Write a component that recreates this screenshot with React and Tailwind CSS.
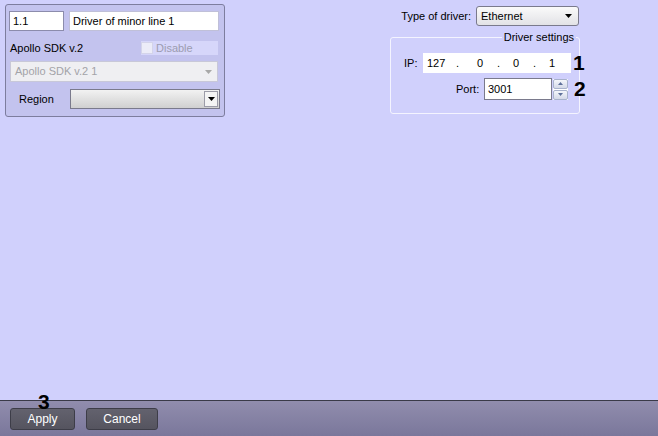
const font = { fontFamily: '"Liberation Sans", Arial, sans-serif' };

function Arrow({ disabled }) {
  return (
    <svg width="7" height="4" viewBox="0 0 7 4" className="block">
      <path d="M0 0 H7 L3.5 4 Z" fill={disabled ? "#a8a8a8" : "#000"} />
    </svg>
  );
}

function Spinner() {
  return (
    <div className="flex h-[21px] w-[15px] flex-col gap-[1px] bg-white">
      <div className="flex flex-1 items-center justify-center rounded-[2px] border border-[#a8b2cc] bg-gradient-to-b from-[#f4f6fb] to-[#d4d9e8]">
        <svg width="5" height="3" viewBox="0 0 5 3"><path d="M0 3 H5 L2.5 0 Z" fill="#5d6f9a" /></svg>
      </div>
      <div className="flex flex-1 items-center justify-center rounded-[2px] border border-[#a8b2cc] bg-gradient-to-b from-[#f4f6fb] to-[#d4d9e8]">
        <svg width="5" height="3" viewBox="0 0 5 3"><path d="M0 0 H5 L2.5 3 Z" fill="#5d6f9a" /></svg>
      </div>
    </div>
  );
}

export default function App() {
  return (
    <div style={font} className="flex h-[436px] w-[658px] flex-col overflow-hidden bg-[#d0d0fc] text-[11px] text-black">
      <div className="relative flex flex-1 items-start">
        {/* Left */}
        <div className="ml-[5px] mt-[4px] flex h-[113px] w-[220px] flex-col rounded-[3px] border border-[#7d7d9e] bg-[#c3c3ee] px-[3px] pt-[6px]">
          <div className="flex gap-[5px]">
            <div className="flex h-[20px] w-[55px] items-center border border-[#8c8cac] bg-white px-[3px]">1.1</div>
            <div className="flex h-[20px] w-[150px] items-center border border-[#c0c0d8] bg-white px-[3px]">Driver of minor line 1</div>
          </div>
          <div className="mt-[10px] flex h-[14px] items-center">
            <span className="ml-[1px]">Apollo SDK v.2</span>
            <div className="ml-auto mr-[3px] flex h-[14px] w-[77px] items-center bg-[#d6d6fa]">
              <span className="h-[12px] w-[12px] border border-[#d4d4ea] bg-[#ececf8]" />
              <span className="ml-[3px] text-[#9c9cb0]">Disable</span>
            </div>
          </div>
          <div className="ml-[1px] mt-[6px] flex h-[21px] w-[208px] items-center justify-between border border-[#c8c8d8] bg-[#efeff2] pl-[4px] pr-[5px] text-[#a3a3a8]">
            <span>Apollo SDK v.2 1</span>
            <Arrow disabled />
          </div>
          <div className="mt-[7px] flex items-center">
            <span className="ml-[10px] w-[51px]">Region</span>
            <div className="flex h-[20px] w-[150px] items-center justify-end border border-[#7a7a8c] bg-gradient-to-b from-[#f2f2f2] to-[#d0d0d0] pr-[1px]">
              <div className="flex h-[16px] w-[14px] items-center justify-center border border-[#9c9ca8] bg-[#f4f4f4]">
                <Arrow />
              </div>
            </div>
          </div>
        </div>

        {/* Right */}
        <div className="relative ml-[165px] flex w-[191px] flex-col">
          <div className="mt-[6px] flex h-[20px] items-center justify-end pr-[2px]">
            <span className="mr-[5px]">Type of driver:</span>
            <div className="flex h-[20px] w-[103px] items-center justify-between rounded-[3px] border border-[#7a7a8c] bg-gradient-to-b from-[#fafafa] to-[#e2e2e6] pl-[4px] pr-[6px]">
              <span>Ethernet</span>
              <Arrow />
            </div>
          </div>
          <div className="relative mt-[11px] h-[77px] w-[190px] rounded-[3px] border border-[#f4f4ff] pt-[15px]">
            <span className="absolute -top-[7px] right-[3px] bg-[#d0d0fc] px-[2px] leading-[13px]">Driver settings</span>
            <div className="flex items-center">
              <span className="ml-[13px] w-[19px]">IP:</span>
              <div className="flex h-[20px] w-[148px] items-center bg-white pl-[4px]">
                <span className="w-[29px]">127</span>
                <span className="w-[21px]">.</span>
                <span className="w-[20px]">0</span>
                <span className="w-[16px]">.</span>
                <span className="w-[20px]">0</span>
                <span className="w-[16px]">.</span>
                <span>1</span>
              </div>
            </div>
            <div className="mt-[5px] flex items-center">
              <span className="ml-[65px] w-[28px]">Port:</span>
              <div className="flex h-[22px] w-[68px] items-center border border-[#7a7a8c] bg-white pl-[3px]">3001</div>
              <div className="ml-[1px]"><Spinner /></div>
            </div>
          </div>
          <span className="absolute left-[183px] top-[52px] text-[21px] font-bold leading-none">1</span>
          <span className="absolute left-[184px] top-[78px] text-[21px] font-bold leading-none">2</span>
        </div>
      </div>

      {/* Bottom bar */}
      <div className="relative h-[36px] border-t border-[#3a3a48] bg-gradient-to-b from-[#918dad] to-[#7a779b]">
        <span className="absolute left-[38px] -top-[10px] text-[21px] font-bold leading-none">3</span>
        <div className="flex gap-[11px] pl-[10px] pt-[7px]">
          <button className="h-[22px] w-[65px] rounded-[3px] border border-[#3d3d48] bg-gradient-to-b from-[#63626e] to-[#55545f] text-[12px] text-white">Apply</button>
          <button className="h-[22px] w-[72px] rounded-[3px] border border-[#3d3d48] bg-gradient-to-b from-[#63626e] to-[#55545f] text-[12px] text-white">Cancel</button>
        </div>
      </div>
    </div>
  );
}
